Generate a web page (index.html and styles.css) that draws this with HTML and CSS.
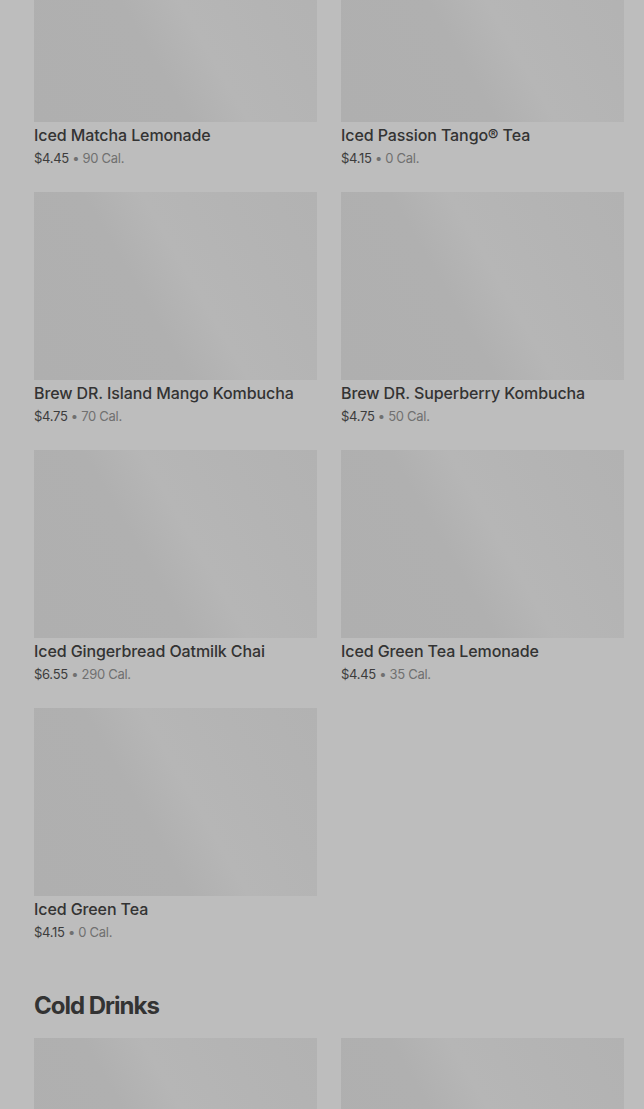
FILE: index.html
```html
<!DOCTYPE html>
<html lang="en">
<head>
    <meta charset="UTF-8">
    <meta name="viewport" content="width=device-width, initial-scale=1.0">
    <title>Menu</title>
    <link rel="stylesheet" href="styles.css">
</head>
<body>
    <div class="page">
        <section class="section first">
            <div class="grid">
                <div class="item">
                    <div class="thumb"></div>
                    <div class="name">Iced Matcha Lemonade</div>
                    <div class="meta"><span class="price">$4.45</span> • 90 Cal.</div>
                </div>
                <div class="item">
                    <div class="thumb"></div>
                    <div class="name">Iced Passion Tango® Tea</div>
                    <div class="meta"><span class="price">$4.15</span> • 0 Cal.</div>
                </div>
                <div class="item">
                    <div class="thumb"></div>
                    <div class="name">Brew DR. Island Mango Kombucha</div>
                    <div class="meta"><span class="price">$4.75</span> • 70 Cal.</div>
                </div>
                <div class="item">
                    <div class="thumb"></div>
                    <div class="name">Brew DR. Superberry Kombucha</div>
                    <div class="meta"><span class="price">$4.75</span> • 50 Cal.</div>
                </div>
                <div class="item">
                    <div class="thumb"></div>
                    <div class="name">Iced Gingerbread Oatmilk Chai</div>
                    <div class="meta"><span class="price">$6.55</span> • 290 Cal.</div>
                </div>
                <div class="item">
                    <div class="thumb"></div>
                    <div class="name">Iced Green Tea Lemonade</div>
                    <div class="meta"><span class="price">$4.45</span> • 35 Cal.</div>
                </div>
                <div class="item">
                    <div class="thumb"></div>
                    <div class="name">Iced Green Tea</div>
                    <div class="meta"><span class="price">$4.15</span> • 0 Cal.</div>
                </div>
            </div>
        </section>

        <section class="section">
            <h2>Cold Drinks</h2>
            <div class="grid">
                <div class="item">
                    <div class="thumb"></div>
                </div>
                <div class="item">
                    <div class="thumb"></div>
                </div>
            </div>
        </section>
    </div>
</body>
</html>
```

FILE: styles.css
```css
body {
    margin: 0;
    background-color: #bdbdbd;
    font-family: Inter, "Noto Sans", sans-serif;
    color: #333;
    overflow: hidden;
}

.page {
    padding: 0 20px 0 34px;
}

.section.first {
    margin-top: -66px;
}

.section {
    margin-bottom: 48px;
}

h2 {
    margin: 0 0 16px;
    font-size: 24px;
    line-height: 32px;
    font-weight: 700;
    letter-spacing: -1px;
    color: #333;
}

.grid {
    display: grid;
    grid-template-columns: 1fr 1fr;
    column-gap: 24px;
    row-gap: 24px;
}

.thumb {
    height: 188px;
    background: linear-gradient(60deg, #afafaf 0%, #b0b0b0 40%, #b6b6b6 55%, #b4b4b4 75%, #b2b2b2 100%);
    margin-bottom: 3px;
}

.name {
    font-size: 16px;
    line-height: 20px;
    font-weight: 500;
    letter-spacing: -0.1px;
    color: #333;
}

.meta {
    margin-top: 3px;
    font-size: 13px;
    line-height: 20px;
    letter-spacing: -0.3px;
    color: #707070;
}

.price {
    color: #3c3c3c;
}
```
